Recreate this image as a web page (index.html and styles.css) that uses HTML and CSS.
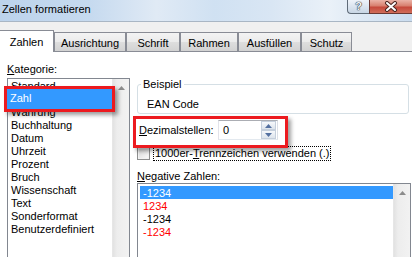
FILE: index.html
```html
<!DOCTYPE html>
<html lang="de">
<head>
<meta charset="utf-8">
<title>Zellen formatieren</title>
<link rel="stylesheet" href="styles.css">
</head>
<body>
<div class="dialog">
  <header class="titlebar">
    <span class="title">Zellen formatieren</span>
    <div class="caption-buttons">
      <span class="cap-btn help">?</span>
      <span class="cap-btn close">
        <svg width="14" height="11" viewBox="0 0 14 11"><path d="M3 2 L11 9 M11 2 L3 9" stroke="#4a2520" stroke-width="4" stroke-linecap="round" fill="none"/><path d="M3 2 L11 9 M11 2 L3 9" stroke="#ffffff" stroke-width="2" stroke-linecap="round" fill="none"/></svg>
      </span>
    </div>
  </header>
  <nav class="tabs">
    <span class="tab active t-zahlen">Zahlen</span>
    <span class="tab t-aus">Ausrichtung</span>
    <span class="tab t-schrift">Schrift</span>
    <span class="tab t-rahmen">Rahmen</span>
    <span class="tab t-fuell">Ausfüllen</span>
    <span class="tab t-schutz">Schutz</span>
  </nav>
  <main class="page">
    <section class="col-left">
      <div class="label"><u>K</u>ategorie:</div>
      <div class="listbox cat">
        <ul class="items">
          <li>Standard</li>
          <li class="sel marked">Zahl</li>
          <li>Währung</li>
          <li>Buchhaltung</li>
          <li>Datum</li>
          <li>Uhrzeit</li>
          <li>Prozent</li>
          <li>Bruch</li>
          <li>Wissenschaft</li>
          <li>Text</li>
          <li>Sonderformat</li>
          <li>Benutzerdefiniert</li>
        </ul>
        <div class="scrollbar">
          <span class="sb-btn"><svg width="7" height="4" viewBox="0 0 7 4"><path d="M0 4 L3.5 0 L7 4 Z" fill="#8c8c8c"/></svg></span>
        </div>
      </div>
    </section>
    <section class="col-right">
      <fieldset class="sample">
        <legend>Beispiel</legend>
        <div class="sample-value">EAN Code</div>
      </fieldset>
      <div class="decimals">
        <span class="dec-label"><u>D</u>ezimalstellen:</span>
        <div class="spin">
          <span class="spin-value">0</span>
          <div class="spin-btns">
            <span class="spin-btn"><svg width="7" height="4" viewBox="0 0 7 4"><path d="M0 4 L3.5 0 L7 4 Z" fill="#5470a0"/></svg></span>
            <span class="spin-btn"><svg width="7" height="4" viewBox="0 0 7 4"><path d="M0 0 L3.5 4 L7 0 Z" fill="#5470a0"/></svg></span>
          </div>
        </div>
      </div>
      <div class="check-row">
        <span class="checkbox"></span>
        <span class="check-label">1000er-<u>T</u>rennzeichen verwenden (.)</span>
      </div>
      <div class="label neg-label"><u>N</u>egative Zahlen:</div>
      <div class="listbox neg">
        <ul class="items">
          <li class="sel">-1234</li>
          <li class="red">1234</li>
          <li>-1234</li>
          <li class="red">-1234</li>
        </ul>
        <div class="scrollbar">
          <span class="sb-btn"><svg width="7" height="4" viewBox="0 0 7 4"><path d="M0 4 L3.5 0 L7 4 Z" fill="#8c8c8c"/></svg></span>
        </div>
      </div>
    </section>
  </main>
</div>
</body>
</html>
```
FILE: styles.css
```css
* { box-sizing: border-box; }
html, body { margin: 0; padding: 0; }
body {
  width: 412px;
  height: 257px;
  overflow: hidden;
  background: #f0f0f0;
  font-family: "Liberation Sans", Arial, sans-serif;
  font-size: 11px;
  line-height: 13px;
  color: #000;
}
.dialog {
  width: 412px;
  height: 257px;
  overflow: hidden;
  background: #f0f0f0;
}
.titlebar {
  display: flex;
  align-items: flex-start;
  height: 22px;
  border-bottom: 1px solid #a9b6c4;
  background: linear-gradient(90deg, #bcd3ec 0%, #c6daef 22%, #e0eaf5 38%, #d0e1f2 52%, #d9e6f4 66%, #eaf1f8 80%, #cadcef 100%);
}
.title { padding: 3px 0 0 2px; white-space: nowrap; }
.caption-buttons { margin-left: auto; display: flex; }
.cap-btn {
  height: 14px;
  display: flex;
  align-items: center;
  justify-content: center;
}
.help {
  width: 22px;
  border: 1px solid #5f6b78;
  border-top: none;
  border-right: none;
  border-radius: 0 0 0 4px;
  background: linear-gradient(#eef3f9, #c8d6e5);
  color: #f4f6f8;
  font-weight: bold;
  font-size: 11px;
  text-shadow: 0 0 1px #2d3a48, 0 0 1px #2d3a48, 0 0 1px #2d3a48;
}
.close {
  width: 43px;
  border: 1px solid #6b3832;
  border-top: none;
  border-right: none;
  background: linear-gradient(#ebb3a7 0%, #d8806f 45%, #c6493b 55%, #d06d5a 100%);
}
.tabs {
  display: flex;
  align-items: flex-end;
  height: 29px;
  margin-left: -1px;
}
.tab {
  height: 19px;
  padding-top: 4px;
  text-align: center;
  white-space: nowrap;
  border: 1px solid #898c95;
  border-bottom: none;
  background: linear-gradient(#f3f3f3 0%, #ebebeb 50%, #dedede 51%, #d2d2d2 100%);
}
.tab.active {
  height: 22px;
  padding-top: 5px;
  background: #fff;
  margin-bottom: -1px;
  position: relative;
  z-index: 1;
}
.t-zahlen { width: 55px; }
.t-aus { width: 72px; }
.t-schrift { width: 54px; }
.t-rahmen { width: 58px; }
.t-fuell { width: 63px; }
.t-schutz { width: 51px; }
.page {
  display: grid;
  grid-template-columns: 123px 274px;
  column-gap: 7px;
  align-items: start;
  padding: 11px 0 0 7px;
  height: 210px;
  background: #fff;
  border-top: 1px solid #898c95;
}
.label { height: 13px; white-space: nowrap; }
.listbox {
  display: flex;
  border: 1px solid #828790;
  background: #fff;
}
.cat { margin-top: 2px; height: 190px; }
.items { list-style: none; margin: 0; padding: 0; flex: 1; }
.items li {
  height: 13px;
  padding: 1px 0 0 3px;
  line-height: 13px;
  white-space: nowrap;
}
.items li.sel { background: #3399ff; color: #fff; }
.items li.red { color: #ff0000; }
/* red highlight frame drawn around the selected category */
.items li.marked {
  position: relative;
  z-index: 1;
  background: transparent;
  padding: 0 0 0 2px;
}
.items li.marked::before {
  content: "";
  position: absolute;
  left: -4px;
  right: -3px;
  top: -6px;
  bottom: -7px;
  z-index: -1;
  border: 3px solid #ec1a1f;
  background: #3399ff;
  box-shadow: 3px 3px 4px rgba(0, 0, 0, 0.38);
}
.scrollbar {
  width: 17px;
  background: linear-gradient(90deg, #e2e2e2 0%, #ededed 25%, #f2f2f2 100%);
  border-left: 1px solid #e6e6e6;
}
.sb-btn {
  display: flex;
  height: 17px;
  align-items: center;
  justify-content: center;
}
.col-right { padding-top: 15px; display: flex; flex-direction: column; }
.sample {
  margin: 0 2px 0 0;
  padding: 7px 0 2px 3px;
  border: 1px solid #d5dfe5;
  border-radius: 3px;
  min-width: 0;
}
.sample legend { padding: 0 2px; line-height: 13px; }
.sample-value { padding-left: 6px; }
.decimals {
  position: relative;
  margin-top: 6px;
  display: flex;
  align-items: center;
  height: 20px;
}
/* red highlight frame around the decimals row */
.decimals::after {
  content: "";
  position: absolute;
  left: -4px;
  top: -4px;
  width: 149px;
  height: 26px;
  border: 3px solid #ec1a1f;
  box-shadow: 3px 3px 4px rgba(0, 0, 0, 0.38);
  pointer-events: none;
}
.dec-label { width: 81px; padding-left: 2px; white-space: nowrap; }
.spin {
  width: 60px;
  height: 20px;
  display: flex;
  border: 1px solid;
  border-color: #abadb3 #dbdfe6 #e3e9ef #e2e3ea;
  background: #fff;
}
.spin-value { flex: 1; padding: 3px 0 0 4px; }
.spin-btns { display: flex; flex-direction: column; width: 15px; margin-right: 1px; }
.spin-btn {
  height: 9px;
  display: flex;
  align-items: center;
  justify-content: center;
  border: 1px solid #c5cfdc;
  background: linear-gradient(#f6f8fb, #dde4ec);
}
.check-row {
  margin-top: 6px;
  display: flex;
  align-items: center;
  gap: 3px;
}
.checkbox {
  width: 13px;
  height: 13px;
  border: 1px solid #8e8f8f;
  background: linear-gradient(135deg, #d8d8d8, #fbfbfb);
  box-shadow: inset 0 0 0 1px #f2f2f2;
}
.check-label {
  border: 1px dotted #000;
  padding: 0 1px;
  line-height: 13px;
  white-space: nowrap;
}
.neg-label { margin-top: 9px; }
.neg { height: 80px; overflow: hidden; }
.neg .items { padding: 2px 0 0 2px; }
```
